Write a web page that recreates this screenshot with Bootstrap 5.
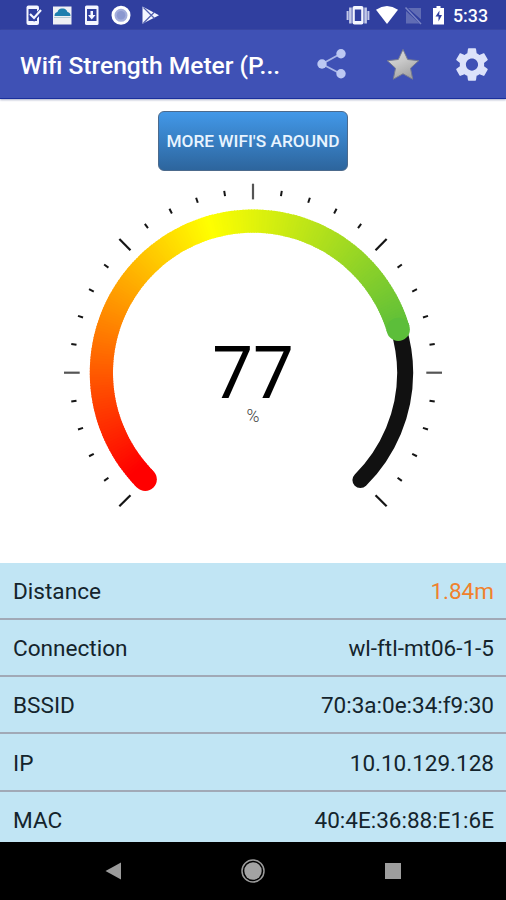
<!DOCTYPE html>
<html lang="en">
<head>
<meta charset="utf-8">
<meta name="viewport" content="width=device-width, initial-scale=1">
<title>Wifi Strength Meter</title>
<link href="https://cdn.jsdelivr.net/npm/bootstrap@5.3.0/dist/css/bootstrap.min.css" rel="stylesheet">
<style>
  body { font-family: Roboto, "Liberation Sans", sans-serif; color: #14242c; }
  svg { display: block; flex: none; }
  .screen { width: 506px; height: 900px; }
  .status { height: 30px; background: #303f9f; padding: 0 18px 0 26px; }
  .clock { font-size: 17.8px; font-weight: 500; width: 35px; margin-left: 9px; line-height: 32px; white-space: nowrap; }
  .appbar { height: 69px; background: #3f51b5; border-bottom: 1px solid #1a2f9c; box-shadow: 0 1px 2px #a9adc8; padding: 0 17px 0 20px; }
  .app-title { font-size: 24.6px; font-weight: 500; line-height: 64px; padding-top: 4px; width: 262px; white-space: nowrap; }
  .meter { height: 463.5px; padding-top: 12px; }
  .more { width: 190px; height: 60px; border: 1px solid #4c6a8c; border-radius: 6px; padding: 2px 0 0; color: #e8f4ff; font-size: 17.3px; font-weight: 500;
    background: linear-gradient(#4298e8, #2d659d); white-space: nowrap; }
  .rows { height: 279.5px; background: #c1e5f4; }
  .rows .info { height: 57.3px; background: #c1e5f4; border: 0; border-bottom: 2px solid #a1a9b6; border-radius: 0; padding: 3px 12px 0 13px; font-size: 22.6px; color: #14242c; }
  .rows .info:last-child { border-bottom: 0; height: 50.3px; padding-top: 8px; }
  .rows .info span + span { font-size: 22.5px; }
  .orange { color: #f0812c; }
  .navkeys { height: 58px; padding: 0 104px; }
</style>
<script src="https://cdn.jsdelivr.net/npm/bootstrap@5.3.0/dist/js/bootstrap.bundle.min.js"></script>
</head>
<body class="m-0 bg-white">
<main class="screen d-flex flex-column overflow-hidden bg-white">
  <div class="status d-flex justify-content-between text-white flex-shrink-0">
    <div class="d-flex">
      <svg width="133" height="30" viewBox="26 0 133 30">
        <rect x="26.5" y="5.500" width="12.500" height="19.500" rx="2" fill="#f4f6ff"/>
        <path d="M28.500 9h8.500v12h-8.500z" fill="#303f9f"/>
        <path d="M30 14.500l4 4 7.500-8.500" fill="none" stroke="#303f9f" stroke-width="4.500"/>
        <path d="M30 14l4 4 7-8" fill="none" stroke="#f4f6ff" stroke-width="2.200"/>
        <rect x="53" y="6.500" width="18.500" height="18" fill="#eef0f4"/>
        <path d="M54.500 16q0-3.500 3-4 1-4 5-3.500 3.500-.5 5 3.500 3 .5 3 4z" fill="#1e7fae"/>
        <path d="M54 17.500h16.500" stroke="#b7cbd3"/>
        <rect x="85" y="5.500" width="13.500" height="19.500" rx="1.500" fill="#f4f6ff"/>
        <path d="M87 9h9.500v12H87z" fill="#303f9f"/>
        <path d="M90.500 11h2.500v4h2.500l-3.750 4.500L88 15h2.500z" fill="#f4f6ff"/>
        <circle cx="121" cy="15.300" r="8" fill="#a3addb" stroke="#fff" stroke-width="3"/>
        <circle cx="121" cy="15.300" r="4.300" fill="#8c98d0"/>
        <path d="M142.500 6.500L159 15.300l-16.500 8.500z" fill="#f4f6ff"/>
        <path d="M143.500 7.500l11 11M143.500 23l11-11" stroke="#5362b0" stroke-width="1.300"/>
      </svg>
    </div>
    <div class="d-flex">
      <svg width="98" height="30" viewBox="346 0 98 30">
        <path d="M347.600 11v9M368.400 11v9" stroke="#c3c9e8" stroke-width="2"/>
        <path d="M350.400 7.500v16M365.600 7.500v16" stroke="#c3c9e8" stroke-width="2.600"/>
        <rect x="352.500" y="6" width="11" height="18.500" rx="2" fill="#f4f6ff"/>
        <path d="M354.800 9.500h6.400v11.500h-6.400z" fill="#303f9f"/>
        <path d="M376 9.700q11-7.400 22 0L387 24z" fill="#fff"/>
        <path d="M410.500 8h10.500v11.500L408 8zM406 11l13.500 12.500H406z" fill="#606cb4"/>
        <path d="M405.500 7.500L421 24" stroke="#7984c4" stroke-width="1.500"/>
        <path d="M436.500 6h4v2h3.500v16.500h-11V8h3.500z" fill="#fff"/>
        <path d="M439.500 10.500l-4 6h3v5l3.500-6.500h-2.800z" fill="#303f9f"/>
      </svg>
      <span class="clock">5:33</span>
    </div>
  </div>

  <header class="appbar d-flex align-items-center justify-content-between text-white flex-shrink-0">
    <div class="app-title">Wifi Strength Meter (P...</div>
    <svg width="172" height="68" viewBox="317 30 172 68" aria-label="Share, rate, settings">
      <defs><linearGradient id="steel" x2=".5" y2="1"><stop stop-color="#dedede"/><stop offset=".5" stop-color="#c8c8c8"/><stop offset="1" stop-color="#a4a4a4"/></linearGradient></defs>
      <path d="M341 53.500L322 64l19 10" fill="none" stroke="#aab7e8" stroke-width="1.800"/>
      <g fill="#bcc8f3"><circle cx="341" cy="53.800" r="4.700"/><circle cx="322" cy="64" r="4.700"/><circle cx="341" cy="73.800" r="4.700"/></g>
      <path d="M403 49.500l4.700 10 11 1.200-8.200 7.500 2.200 11-9.700-5.400-9.700 5.400 2.200-11-8.200-7.500 11-1.200z" fill="url(#steel)" stroke="#777c90" stroke-width="1" stroke-linejoin="round"/>
      <g transform="translate(451.700 44.300) scale(1.690)">
        <path fill="#dce2fa" d="M19.140 12.940c.04-.3.060-.61.060-.94 0-.32-.02-.64-.07-.94l2.030-1.580c.18-.14.230-.41.120-.61l-1.920-3.320c-.12-.22-.37-.29-.59-.22l-2.390.96c-.5-.38-1.030-.7-1.620-.94l-.36-2.540c-.04-.24-.24-.41-.48-.41h-3.840c-.24 0-.43.17-.47.41l-.36 2.540c-.59.240-1.130.57-1.620.94l-2.390-.96c-.22-.08-.47 0-.59.220L2.740 8.870c-.12.210-.08.470.12.610l2.030 1.580c-.05.300-.09.630-.09.940s.02.640.07.940l-2.030 1.580c-.18.140-.23.410-.12.610l1.920 3.320c.12.220.37.290.59.220l2.390-.96c.5.380 1.030.7 1.620.94l.36 2.540c.05.240.24.410.48.410h3.840c.24 0 .44-.17.470-.41l.36-2.540c.59-.24 1.130-.56 1.620-.94l2.390.96c.22.080.47 0 .59-.22l1.920-3.320c.12-.22.070-.47-.12-.61l-2.010-1.580zM12 15.600c-1.980 0-3.600-1.620-3.600-3.600s1.620-3.600 3.600-3.600 3.600 1.620 3.600 3.600-1.620 3.600-3.600 3.600z"/>
      </g>
    </svg>
  </header>

  <section class="meter d-flex flex-column align-items-center flex-shrink-0">
    <button type="button" class="btn more">MORE WIFI'S AROUND</button>
    <svg width="506" height="391" viewBox="0 171 506 391" role="img" aria-label="Signal strength 77 percent">
      <path d="M405.200 372.700A152 152 0 0 1 360.400 480.100M398.200 328A152 152 0 0 1 405.200 372.700" fill="none" stroke="#111" stroke-width="16" stroke-linecap="round"/>
      <g id="ticks" stroke="#111"></g>
      <g id="arc" fill="none" stroke-width="23.200"></g>
      <text x="253" y="397.500" text-anchor="middle" font-size="72.500" fill="#000">77</text>
      <text x="253" y="422" text-anchor="middle" font-size="17.500" font-weight="300" fill="#444">%</text>
    </svg>
  </section>

  <div class="rows list-group list-group-flush flex-shrink-0">
    <div class="info list-group-item d-flex justify-content-between align-items-center"><span>Distance</span><span class="orange">1.84m</span></div>
    <div class="info list-group-item d-flex justify-content-between align-items-center"><span>Connection</span><span>wl-ftl-mt06-1-5</span></div>
    <div class="info list-group-item d-flex justify-content-between align-items-center"><span>BSSID</span><span>70:3a:0e:34:f9:30</span></div>
    <div class="info list-group-item d-flex justify-content-between align-items-center"><span>IP</span><span>10.10.129.128</span></div>
    <div class="info list-group-item d-flex justify-content-between align-items-center"><span>MAC</span><span>40:4E:36:88:E1:6E</span></div>
  </div>

  <nav class="navkeys bg-black d-flex justify-content-between align-items-center flex-shrink-0">
    <svg width="18" height="20" viewBox="0 0 18 20"><path d="M1.500 10L17 1.500v17z" fill="#9b9b9b"/></svg>
    <svg width="26" height="26" viewBox="0 0 26 26"><circle cx="13" cy="13" r="11" fill="none" stroke="#9b9b9b" stroke-width="1.500"/><circle cx="13" cy="13" r="8.700" fill="#a3a3a3"/></svg>
    <svg width="18" height="18" viewBox="0 0 18 18"><path d="M1 1h16v16H1z" fill="#9e9e9e"/></svg>
  </nav>
</main>
<script>
  const NS = 'http://www.w3.org/2000/svg', CX = 253, CY = 372.7;
  // Angles are in degrees clockwise from twelve o'clock.
  const at = (r, deg) => {
    const a = deg * Math.PI / 180;
    return [CX + r * Math.sin(a), CY - r * Math.cos(a)];
  };
  const add = (id, name, attrs) => {
    const el = document.createElementNS(NS, name);
    for (const k in attrs) el.setAttribute(k, attrs[k]);
    document.getElementById(id).appendChild(el);
  };
  for (let i = 0; i <= 30; i++) {
    const deg = -135 + i * 9, major = i % 5 === 0, flat = major && deg % 90 === 0;
    const [x1, y1] = at(major ? 189 : 184, deg), [x2, y2] = at(major ? 173.3 : 178.7, deg);
    add('ticks', 'line', { x1, y1, x2, y2, 'stroke-width': major ? 2.2 : 2, stroke: flat ? '#555' : '#151515' });
  }
  const start = -134.700, end = 73.400, mid = -17;
  const mix = (a, b, t) => 'rgb(' + a.map((v, i) => Math.round(v + (b[i] - v) * t)) + ')';
  const colour = d => d < mid ? mix([255, 0, 0], [255, 255, 0], Math.max(0, (d - start - 4) / (mid - start - 4)))
                              : mix([255, 255, 0], [92, 190, 58], (d - mid) / (end - mid));
  for (let d = start; d < end; d++) {
    const p = at(151.6, d), q = at(151.6, Math.min(end, d + 1.4));
    add('arc', 'path', { d: `M${p}A151.6 151.6 0 0 1 ${q}`, stroke: colour(d) });
  }
  for (const d of [start, end]) {
    const [cx, cy] = at(151.6, d);
    add('arc', 'circle', { cx, cy, r: 11.6, fill: colour(d), 'stroke-width': 0 });
  }
</script>
</body>
</html>
